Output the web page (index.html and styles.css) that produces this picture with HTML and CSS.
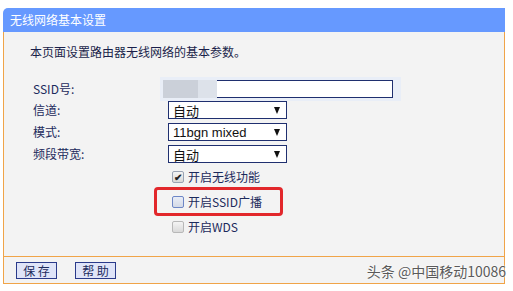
FILE: index.html
```html
<!DOCTYPE html>
<html lang="zh-CN">
<head>
  <meta charset="UTF-8">
  <title>无线网络基本设置</title>
  <link rel="stylesheet" href="styles.css">
</head>
<body>
<div class="panel">
  <div class="panel-title">无线网络基本设置</div>
  <div class="panel-body">
    <p class="intro">本页面设置路由器无线网络的基本参数。</p>
    <div class="form">
      <div class="row">
        <span class="label">SSID号:</span>
        <div class="ssid">
          <span class="blur blur-a"></span><span class="blur blur-b"></span><span class="ssid-input"></span>
        </div>
      </div>
      <div class="row">
        <span class="label">信道:</span>
        <div class="select"><span>自动</span><span class="arrow"></span></div>
      </div>
      <div class="row">
        <span class="label">模式:</span>
        <div class="select"><span class="latin">11bgn mixed</span><span class="arrow"></span></div>
      </div>
      <div class="row">
        <span class="label">频段带宽:</span>
        <div class="select"><span>自动</span><span class="arrow"></span></div>
      </div>
      <div class="row check-row">
        <span class="label"></span>
        <label class="check"><span class="box checked">✔</span>开启无线功能</label>
      </div>
      <div class="row check-row">
        <span class="label"></span>
        <label class="check marked"><span class="box focus"></span>开启SSID广播<span class="highlight"></span></label>
      </div>
      <div class="row check-row">
        <span class="label"></span>
        <label class="check"><span class="box dim"></span>开启WDS</label>
      </div>
    </div>
  </div>
  <div class="panel-foot">
    <button class="btn">保 存</button>
    <button class="btn">帮 助</button>
    <span class="watermark">头条 @中国移动10086</span>
  </div>
</div>
</body>
</html>
```

FILE: styles.css
```css
body {
  margin: 0;
  background: #fff;
  font-family: "Noto Sans CJK SC", "Liberation Sans", sans-serif;
  font-size: 12px;
  color: #1c2a5c;
}
.panel {
  margin: 8px 0 0 3px;
  width: 502px;
}
.panel-title {
  height: 24px;
  line-height: 24px;
  padding-left: 7px;
  background: #6699ff;
  color: #fff;
  border-radius: 5px 0 0 0;
}
.panel-body {
  background: #f3f3f3;
  border-left: 1px solid #f0a448;
  border-right: 1px solid #f0a448;
  border-bottom: 1px solid #f0a448;
  padding: 12px 0 17px 0;
}
.intro {
  margin: 0;
  padding-left: 26px;
  height: 16px;
  line-height: 16px;
  color: #1a1f4a;
}
.form {
  margin-top: 17px;
  padding-left: 29px;
}
.row {
  display: grid;
  grid-template-columns: 135px 1fr;
  align-items: center;
  height: 22px;
}
.label {
  line-height: 16px;
}
.ssid {
  display: flex;
  align-items: center;
  width: 238px;
  height: 24px;
  margin-left: -8px;
  padding-left: 3px;
  background: #e9eef7;
}
.blur {
  height: 18px;
}
.blur-a {
  width: 35px;
  background: #cbd0d9;
}
.blur-b {
  width: 19px;
  background: #dde2ea;
}
.ssid-input {
  width: 175px;
  height: 16px;
  background: #fff;
  border: 1px solid #1f2f6f;
  border-left: none;
}
.select {
  display: flex;
  align-items: center;
  justify-content: space-between;
  height: 16px;
  padding: 0 0 0 4px;
  width: 113px;
  border: 1px solid #1f2f6f;
  background: #fff;
  color: #111;
  font-size: 13px;
}
.latin {
  font-family: "Liberation Sans", sans-serif;
  font-size: 13px;
}
.arrow {
  width: 0;
  height: 0;
  margin-right: 6px;
  border-left: 3px solid transparent;
  border-right: 3px solid transparent;
  border-top: 7px solid #111;
}
.check-row {
  height: 24px;
}
.check-row + .check-row {
  height: 25px;
}
.check {
  position: relative;
  display: flex;
  align-items: center;
  gap: 4px;
  margin-left: 4px;
  line-height: 16px;
}
.box {
  width: 10px;
  height: 10px;
  border: 1px solid #9aa3b3;
  border-radius: 2px;
  background: linear-gradient(#f4f4f4, #d9d9d9);
  font-size: 10px;
  line-height: 10px;
  text-align: center;
  color: #222;
  font-weight: bold;
}
.box.focus {
  border-color: #6d86c6;
  background: linear-gradient(#e9edf7, #d3d9e6);
}
.box.dim {
  border-color: #b8b8b8;
}
.highlight {
  position: absolute;
  left: -18px;
  top: -7px;
  width: 123px;
  height: 23px;
  border: 3px solid #e2272b;
  border-radius: 4px;
}
.panel-foot {
  position: relative;
  display: flex;
  align-items: center;
  gap: 18px;
  height: 26px;
  padding-left: 12px;
  background: #f3f3f3;
  border-left: 1px solid #f0a448;
  border-right: 1px solid #f0a448;
  border-bottom: 1px solid #f0a448;
}
.btn {
  width: 41px;
  height: 17px;
  padding: 0;
  border: 1px solid #2a3a8a;
  background: #dfe4f8;
  color: #1c2a5c;
  font-family: "Noto Sans CJK SC", sans-serif;
  font-size: 12px;
  line-height: 15px;
}
.watermark {
  position: absolute;
  right: -2px;
  bottom: 2px;
  font-size: 14px;
  color: #5a5a5a;
  text-shadow: 0 0 2px #fff, 0 0 2px #fff;
}
```
